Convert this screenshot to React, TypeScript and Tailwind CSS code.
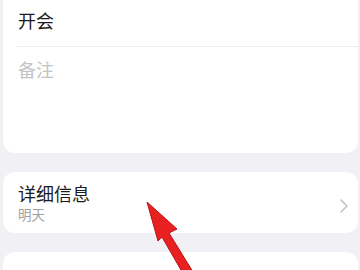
import React from "react";

export default function App() {
  return (
    <div className="relative w-[360px] h-[270px] overflow-hidden bg-[#f1f1f5]" style={{ fontFamily: '"Noto Sans CJK SC", "Noto Sans", sans-serif' }}>
      <div className="flex flex-col gap-[19px] pl-[3px] pr-[2px]">
        <div className="-mt-[12px] h-[165px] rounded-[12px] bg-white flex flex-col">
          <div className="h-[58px] flex items-end pb-[15px] pl-[15px]">
            <span className="text-[18px] leading-[22px] text-[#1c1c1c]">开会</span>
          </div>
          <div className="ml-[14px] h-[1px] bg-[#ececee]" />
          <div className="pl-[15px] pt-[11px]">
            <span className="text-[18px] leading-[22px] text-[#c4c4c4]">备注</span>
          </div>
        </div>
        <div className="h-[61px] rounded-[12px] bg-white flex items-start pl-[15px] pr-[9px] pt-[10px]">
          <div className="flex flex-col flex-1">
            <span className="text-[18px] leading-[22px] text-[#1c1c1c]">详细信息</span>
            <span className="mt-[2px] text-[13.5px] leading-[17px] text-[#a0a0a0]">明天</span>
          </div>
          <svg width="10" height="16" viewBox="0 0 10 16" className="mt-[16px]">
            <path d="M2 2 L8 8 L2 14" fill="none" stroke="#c2c2c2" strokeWidth="1.6" strokeLinecap="round" strokeLinejoin="round" />
          </svg>
        </div>
        <div className="h-[60px] rounded-[12px] bg-white" />
      </div>
      <svg className="absolute left-0 top-0" width="360" height="270" viewBox="0 0 360 270">
        <polygon
          points="147,202 177,229 169,233 198,280 189,284 162,237 158,241"
          fill="#e8201f"
          stroke="#b81414"
          strokeWidth="1"
          strokeLinejoin="round"
        />
      </svg>
    </div>
  );
}
